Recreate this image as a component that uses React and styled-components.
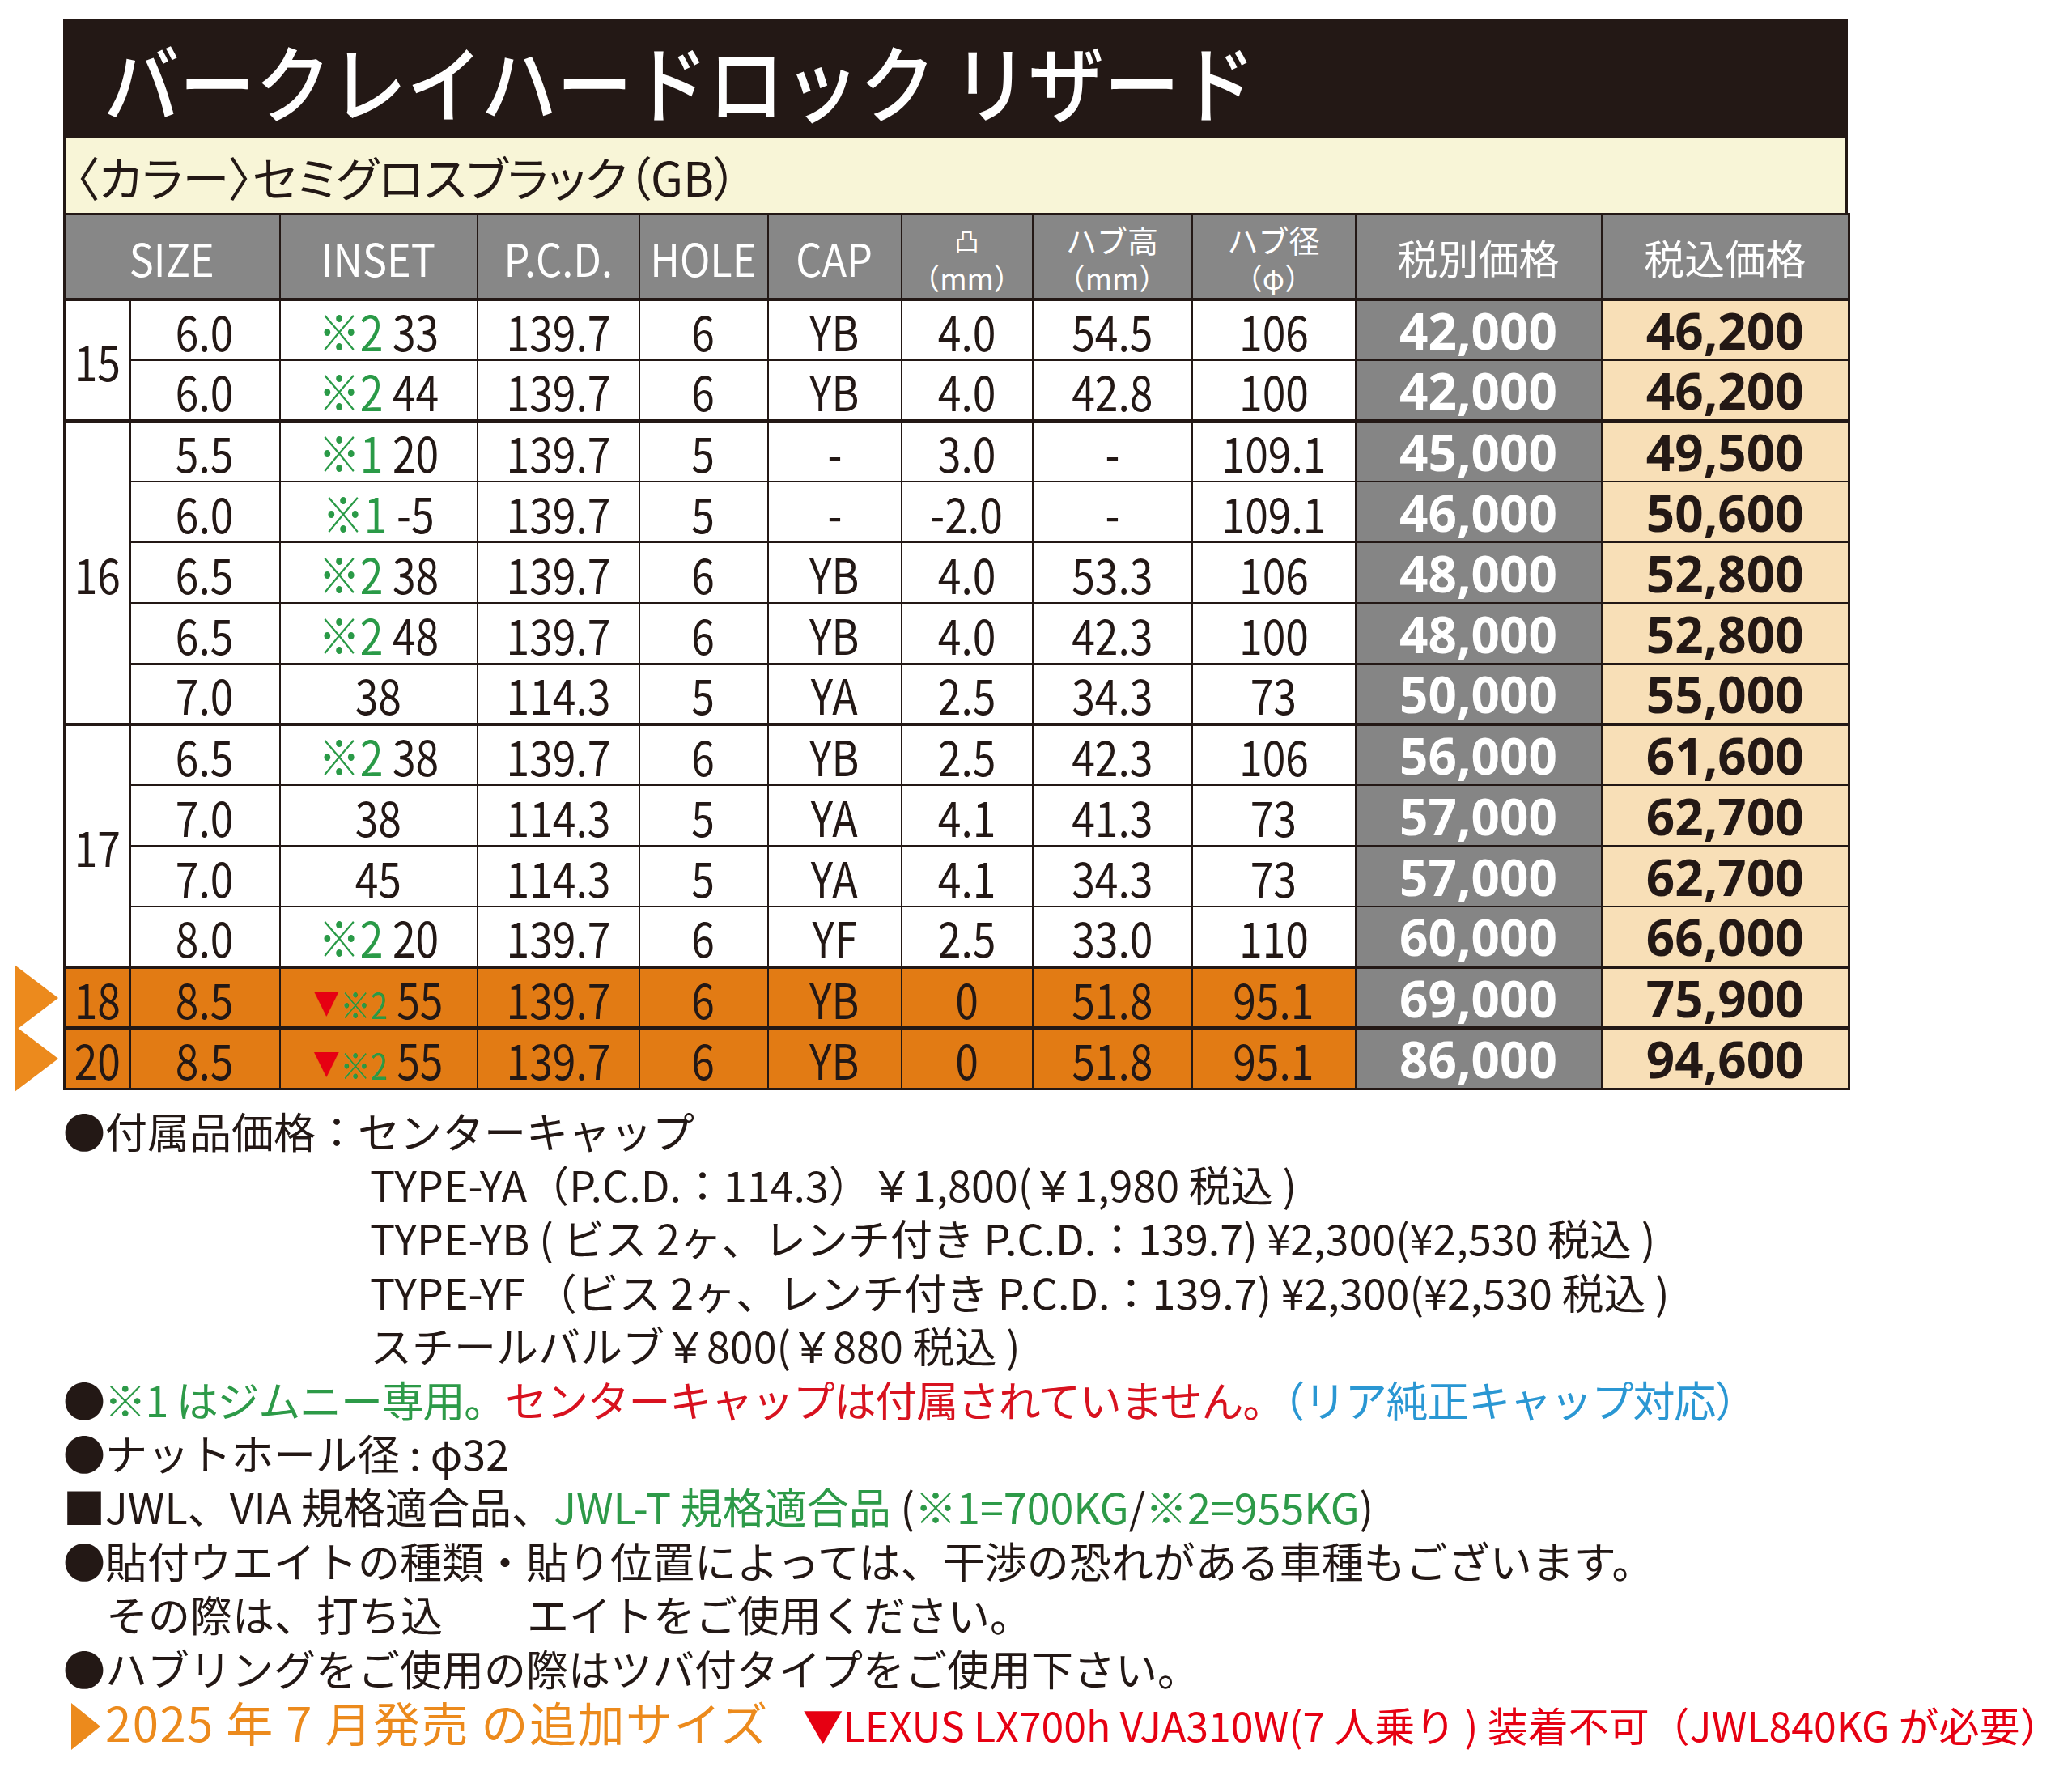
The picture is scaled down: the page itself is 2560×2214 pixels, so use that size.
import React from 'react';
import styled, { createGlobalStyle, css } from 'styled-components';

const JP = `"Noto Sans CJK JP", "Noto Sans", sans-serif`;
const INK = '#231815';

const GlobalStyle = createGlobalStyle`
  html, body {
    margin: 0;
    background: #fff;
  }
  body {
    font-family: ${JP};
    color: ${INK};
  }
`;

const Page = styled.div`
  width: 2560px;
  padding: 24px 0 40px 78px;
  box-sizing: border-box;
`;

const Sheet = styled.div`
  width: 2205px;
`;

const TitleBar = styled.h1`
  margin: 0;
  height: 147px;
  background: ${INK};
  color: #fff;
  font-family: ${JP};
  font-weight: 500;
  font-size: 104px;
  line-height: 150px;
  padding-left: 50px;
  white-space: nowrap;
`;

const TitleText = styled.span`
  display: inline-block;
  transform: scaleX(0.9);
  transform-origin: left center;
`;

const ColorBar = styled.div`
  height: 92px;
  background: #f8f5d7;
  border-left: 3px solid ${INK};
  border-right: 3px solid ${INK};
  box-sizing: border-box;
  padding-left: 12px;
  font-size: 58px;
  line-height: 94px;
  font-feature-settings: 'palt';
  white-space: nowrap;
`;

const Table = styled.table`
  border-collapse: collapse;
  table-layout: fixed;
  width: 2205px;
  border: 3px solid ${INK};
`;

const Th = styled.th`
  height: 102px;
  padding: 0;
  background: #878787;
  color: #fff;
  font-weight: 400;
  font-size: ${(p) => (p.$jp ? '50px' : '56px')};
  border: 2px solid ${INK};
  border-bottom-width: 4px;
  white-space: nowrap;
`;

const HeadStack = styled.div`
  display: flex;
  flex-direction: column;
  align-items: center;
  line-height: 46px;
  font-size: 36px;
  margin-top: 4px;
`;

const HeadTop = styled.span`
  font-size: ${(p) => (p.$tiny ? '30px' : '38px')};
`;

const Squeeze = styled.span`
  display: inline-block;
  transform: scaleX(${(p) => p.$x || 0.86});
`;

const Row = styled.tr`
  height: 75px;
  background: ${(p) => (p.$new ? '#e27b14' : '#fff')};
`;

const Td = styled.td`
  padding: 0;
  text-align: center;
  font-family: ${JP};
  font-size: 60px;
  line-height: 1;
  white-space: nowrap;
  border: 2px solid ${INK};
  ${(p) =>
    p.$groupStart &&
    css`
      border-top-width: 4px;
    `}
  ${(p) =>
    p.$price === 'ex' &&
    css`
      background: #858585;
      color: #fff;
    `}
  ${(p) =>
    p.$price === 'in' &&
    css`
      background: #f8dfb7;
      color: ${INK};
    `}
  ${(p) =>
    p.$price &&
    css`
      font-family: "Noto Sans", sans-serif;
      font-weight: 700;
      font-size: 62px;
    `}
`;

const GroupCell = styled(Td)`
  position: relative;
  ${(p) =>
    p.$new &&
    css`
      &::before {
        content: '';
        position: absolute;
        left: -63px;
        top: 50%;
        transform: translateY(-50%);
        border-left: 54px solid #ec8a1d;
        border-top: 41px solid transparent;
        border-bottom: 41px solid transparent;
      }
    `}
`;

const Mark = styled.span`
  color: #2a9a47;
  font-size: ${(p) => (p.$small ? '44px' : '60px')};
`;

const Drop = styled.span`
  color: #e60012;
  font-size: 38px;
  vertical-align: 6px;
`;

const Notes = styled.div`
  margin-top: 17px;
  font-size: 52px;
  line-height: 66.4px;
  white-space: nowrap;
`;

const Line = styled.div`
  padding-left: ${(p) => p.$indent || 0}px;
  letter-spacing: ${(p) => p.$track || 0}px;
`;

const Tone = styled.span`
  color: ${(p) => p.$c};
`;

const Pointer = styled.span`
  display: inline-block;
  width: 0;
  height: 0;
  margin: 0 6px 0 10px;
  border-left: 36px solid #ec8a1c;
  border-top: 29px solid transparent;
  border-bottom: 29px solid transparent;
  vertical-align: -10px;
`;

const Fresh = styled.span`
  color: #ec8a1c;
  font-size: 58px;
  letter-spacing: 1.5px;
`;

const Warning = styled.span`
  margin-left: 42px;
  color: #e60012;
  font-size: 50px;
`;

const GREEN = '#2d9a48';
const RED = '#d8121f';
const BLUE = '#2a97d3';

const groups = [
  {
    size: '15',
    rows: [
      ['6.0', ['※2', '33'], '139.7', '6', 'YB', '4.0', '54.5', '106', '42,000', '46,200'],
      ['6.0', ['※2', '44'], '139.7', '6', 'YB', '4.0', '42.8', '100', '42,000', '46,200'],
    ],
  },
  {
    size: '16',
    rows: [
      ['5.5', ['※1', '20'], '139.7', '5', '-', '3.0', '-', '109.1', '45,000', '49,500'],
      ['6.0', ['※1', '-5'], '139.7', '5', '-', '-2.0', '-', '109.1', '46,000', '50,600'],
      ['6.5', ['※2', '38'], '139.7', '6', 'YB', '4.0', '53.3', '106', '48,000', '52,800'],
      ['6.5', ['※2', '48'], '139.7', '6', 'YB', '4.0', '42.3', '100', '48,000', '52,800'],
      ['7.0', [null, '38'], '114.3', '5', 'YA', '2.5', '34.3', '73', '50,000', '55,000'],
    ],
  },
  {
    size: '17',
    rows: [
      ['6.5', ['※2', '38'], '139.7', '6', 'YB', '2.5', '42.3', '106', '56,000', '61,600'],
      ['7.0', [null, '38'], '114.3', '5', 'YA', '4.1', '41.3', '73', '57,000', '62,700'],
      ['7.0', [null, '45'], '114.3', '5', 'YA', '4.1', '34.3', '73', '57,000', '62,700'],
      ['8.0', ['※2', '20'], '139.7', '6', 'YF', '2.5', '33.0', '110', '60,000', '66,000'],
    ],
  },
  {
    size: '18',
    isNew: true,
    rows: [['8.5', ['※2', '55'], '139.7', '6', 'YB', '0', '51.8', '95.1', '69,000', '75,900']],
  },
  {
    size: '20',
    isNew: true,
    rows: [['8.5', ['※2', '55'], '139.7', '6', 'YB', '0', '51.8', '95.1', '86,000', '94,600']],
  },
];

const widths = [81, 185, 244, 200, 159, 165, 162, 197, 202, 304, 306];

function Inset({ mark, value, isNew }) {
  return (
    <Squeeze>
      {isNew && <Drop>▼</Drop>}
      {mark && <Mark $small={isNew}>{mark}</Mark>}
      {mark ? ' ' : ''}
      {value}
    </Squeeze>
  );
}

function SpecRow({ row, group, first }) {
  const [size, inset, pcd, hole, cap, offset, hubH, hubD, ex, inc] = row;
  const plain = [pcd, hole, cap, offset, hubH, hubD];
  return (
    <Row $new={group.isNew}>
      {first && (
        <GroupCell rowSpan={group.rows.length} $groupStart $new={group.isNew}>
          <Squeeze>{group.size}</Squeeze>
        </GroupCell>
      )}
      <Td $groupStart={first}>
        <Squeeze>{size}</Squeeze>
      </Td>
      <Td $groupStart={first}>
        <Inset mark={inset[0]} value={inset[1]} isNew={group.isNew} />
      </Td>
      {plain.map((v, i) => (
        <Td key={i} $groupStart={first}>
          <Squeeze>{v}</Squeeze>
        </Td>
      ))}
      <Td $groupStart={first} $price="ex">
        {ex}
      </Td>
      <Td $groupStart={first} $price="in">
        {inc}
      </Td>
    </Row>
  );
}

function TwoLine({ top, bottom, tiny }) {
  return (
    <HeadStack>
      <HeadTop $tiny={tiny}>{top}</HeadTop>
      <span>{bottom}</span>
    </HeadStack>
  );
}

export default function App() {
  return (
    <>
      <GlobalStyle />
      <Page>
        <Sheet>
          <TitleBar>
            <TitleText>バークレイハードロック リザード</TitleText>
          </TitleBar>
          <ColorBar>〈カラー〉セミグロスブラック（GB）</ColorBar>
          <Table>
            <colgroup>
              {widths.map((w, i) => (
                <col key={i} style={{ width: w }} />
              ))}
            </colgroup>
            <thead>
              <tr>
                <Th colSpan={2}>
                  <Squeeze $x={0.9}>SIZE</Squeeze>
                </Th>
                <Th>
                  <Squeeze $x={0.9}>INSET</Squeeze>
                </Th>
                <Th>
                  <Squeeze $x={0.9}>P.C.D.</Squeeze>
                </Th>
                <Th>
                  <Squeeze $x={0.9}>HOLE</Squeeze>
                </Th>
                <Th>
                  <Squeeze $x={0.9}>CAP</Squeeze>
                </Th>
                <Th>
                  <TwoLine top="凸" bottom="（mm）" tiny />
                </Th>
                <Th>
                  <TwoLine top="ハブ高" bottom="（mm）" />
                </Th>
                <Th>
                  <TwoLine top="ハブ径" bottom="（φ）" />
                </Th>
                <Th $jp>税別価格</Th>
                <Th $jp>税込価格</Th>
              </tr>
            </thead>
            <tbody>
              {groups.map((g) =>
                g.rows.map((r, i) => <SpecRow key={g.size + i} row={r} group={g} first={i === 0} />)
              )}
            </tbody>
          </Table>
        </Sheet>

        <Notes>
          <Line>●付属品価格：センターキャップ</Line>
          <Line $indent={379}>TYPE-YA（P.C.D.：114.3）￥1,800(￥1,980 税込 )</Line>
          <Line $indent={379}>TYPE-YB ( ビス 2ヶ、レンチ付き P.C.D.：139.7) ¥2,300(¥2,530 税込 )</Line>
          <Line $indent={379}>TYPE-YF （ビス 2ヶ、レンチ付き P.C.D.：139.7) ¥2,300(¥2,530 税込 )</Line>
          <Line $indent={379}>スチールバルブ￥800(￥880 税込 )</Line>
          <Line $track={-1.2}>
            ●<Tone $c={GREEN}>※1 はジムニー専用。</Tone>
            <Tone $c={RED}>センターキャップは付属されていません。</Tone>
            <Tone $c={BLUE}>（リア純正キャップ対応）</Tone>
          </Line>
          <Line>●ナットホール径 : φ32</Line>
          <Line>
            ■JWL、VIA 規格適合品、<Tone $c={GREEN}>JWL-T 規格適合品</Tone> (
            <Tone $c={GREEN}>※1=700KG</Tone>/<Tone $c={GREEN}>※2=955KG</Tone>)
          </Line>
          <Line>●貼付ウエイトの種類・貼り位置によっては、干渉の恐れがある車種もございます。</Line>
          <Line $indent={53}>その際は、打ち込　　エイトをご使用ください。</Line>
          <Line>●ハブリングをご使用の際はツバ付タイプをご使用下さい。</Line>
          <Line>
            <Pointer />
            <Fresh>2025 年 7 月発売 の追加サイズ</Fresh>
            <Warning>▼LEXUS LX700h VJA310W(7 人乗り ) 装着不可（JWL840KG が必要）</Warning>
          </Line>
        </Notes>
      </Page>
    </>
  );
}
